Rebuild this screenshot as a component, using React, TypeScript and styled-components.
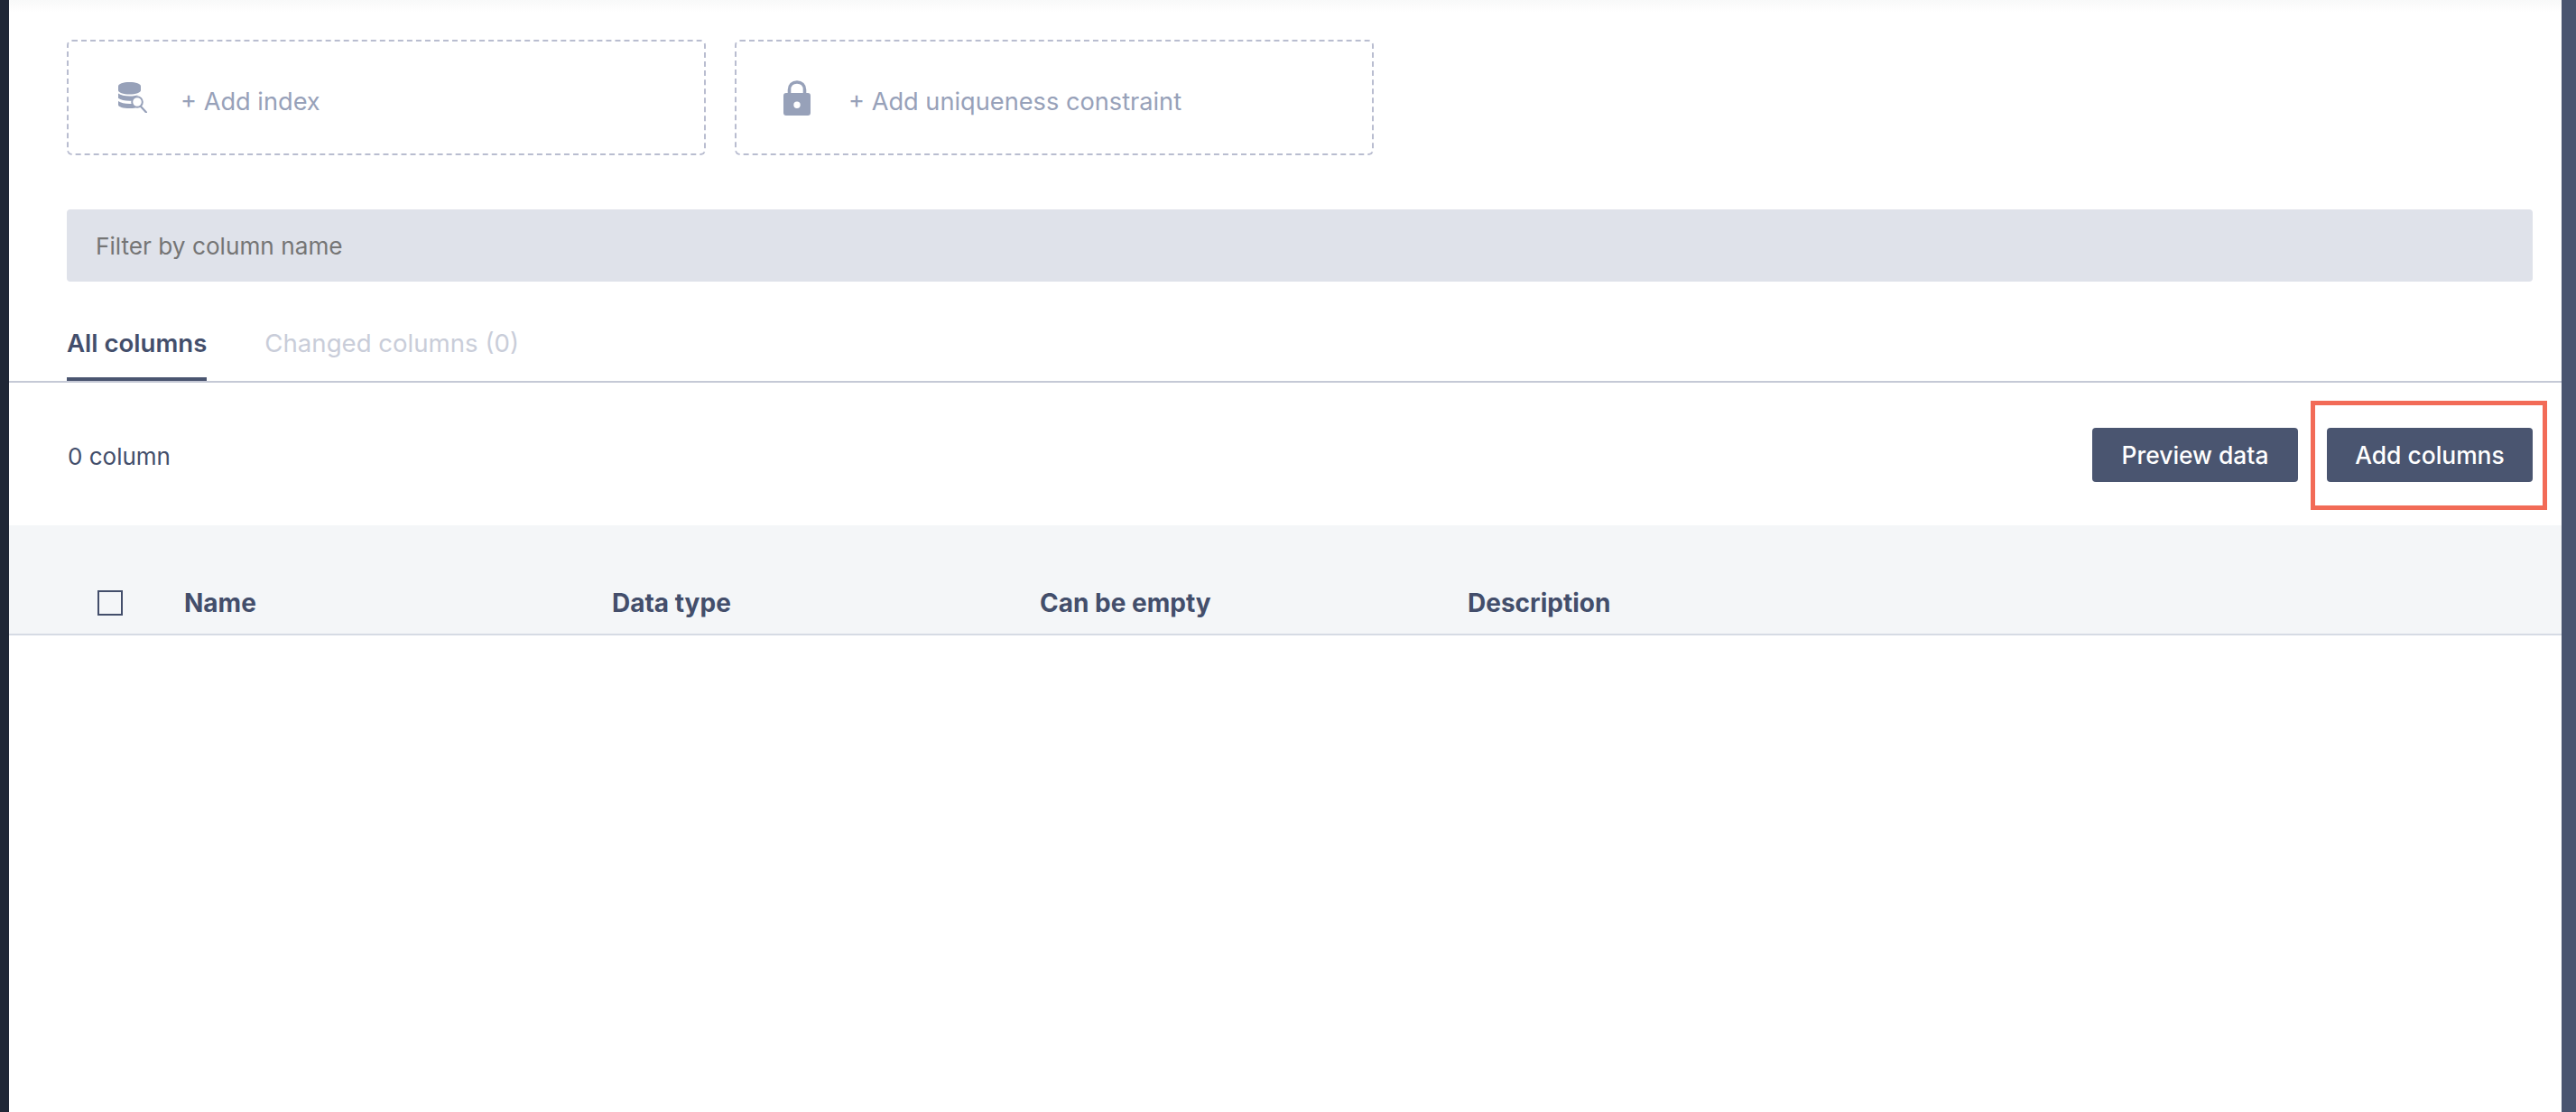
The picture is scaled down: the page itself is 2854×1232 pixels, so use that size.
import React from 'react';
import styled, { createGlobalStyle } from 'styled-components';

const GlobalStyle = createGlobalStyle`
  html, body {
    margin: 0;
    padding: 0;
    background: #fff;
    overflow: hidden;
  }
  * {
    box-sizing: border-box;
  }
`;

const Page = styled.div`
  display: flex;
  height: 1232px;
  font-family: Inter, "Liberation Sans", sans-serif;
  font-size: 28px;
  color: #434e6b;
`;

const LeftEdge = styled.div`
  width: 10px;
  background: #1f2736;
`;

const RightEdge = styled.div`
  width: 16px;
  background: #4a5570;
`;

const Main = styled.main`
  position: relative;
  flex: 1;
  min-width: 0;
  background: #fff;
`;

const TopShade = styled.div`
  height: 14px;
  background: linear-gradient(#f8f9f9, #fff);
`;

const Section = styled.div`
  padding: 0 32px 0 64px;
`;

const CardRow = styled(Section)`
  display: flex;
  gap: 32px;
  padding-top: 30px;
`;

const ActionCard = styled.div<{ $pad: number }>`
  display: flex;
  align-items: center;
  width: 708px;
  height: 128px;
  border: 2px dashed #b9bdd0;
  border-radius: 6px;
  color: #97a1b9;
  padding-left: ${(props) => props.$pad}px;
`;

const IconSlot = styled.span`
  display: flex;
  flex: 0 0 auto;
`;

const CardLabel = styled.span<{ $gap: number }>`
  margin-left: ${(props) => props.$gap}px;
  font-size: 27.2px;
  line-height: 34px;
  padding-top: 9px;
`;

const FilterBox = styled.input`
  display: block;
  width: 100%;
  height: 80px;
  margin-top: 60px;
  padding: 0 32px;
  border: 0;
  border-radius: 4px;
  background: #dfe2ea;
  font: inherit;
  font-size: 26.2px;
  outline: none;

  &::placeholder {
    color: #757575;
    opacity: 1;
  }
`;

const TabBar = styled.div`
  display: flex;
  gap: 64px;
  height: 112px;
  padding: 0 0 0 64px;
  border-bottom: 2px solid #c5c9d6;
`;

const Tab = styled.div<{ $active?: boolean }>`
  display: flex;
  align-items: flex-start;
  height: 110px;
  padding-top: 51px;
  font-size: 27.6px;
  line-height: 34px;
  font-weight: ${(props) => (props.$active ? 600 : 400)};
  color: ${(props) => (props.$active ? '#434e6b' : '#c9cdd9')};
  border-bottom: ${(props) => (props.$active ? '4px solid #4a5570' : '0')};
`;

const Toolbar = styled(Section)`
  display: flex;
  align-items: center;
  justify-content: space-between;
  height: 158px;
  padding-top: 2px;
`;

const CountLabel = styled.span`
  font-size: 26px;
  padding-top: 2px;
  padding-left: 1px;
`;

const Buttons = styled.div`
  display: flex;
  gap: 32px;
`;

const Button = styled.button`
  width: 228px;
  height: 60px;
  border: 0;
  border-radius: 4px;
  padding: 0;
  background: #4a5570;
  color: #fff;
  font: inherit;
  font-size: 26.4px;
  font-weight: 500;
`;

const Highlight = styled.div`
  position: absolute;
  left: 2550px;
  top: 444px;
  width: 262px;
  height: 121px;
  border: 5px solid #f26b57;
  pointer-events: none;
`;

const TableHead = styled.div`
  display: grid;
  grid-template-columns: 194px repeat(3, 474px) 1fr;
  align-items: center;
  height: 122px;
  padding: 62px 0 0;
  border-bottom: 2px solid #d6dbe4;
  background: #f4f6f8;
  font-weight: 700;
`;

const CheckCell = styled.div`
  display: flex;
  padding-left: 98px;
  margin-bottom: 10px;
`;

const CheckBox = styled.input.attrs({ type: 'checkbox' })`
  appearance: none;
  width: 28px;
  height: 28px;
  margin: 0;
  border: 2px solid #434e6b;
  background: transparent;
`;

const HeadCell = styled.div`
  line-height: 34px;
  margin-bottom: 10px;
`;

const DatabaseIcon = () => (
  <svg width="32" height="34" viewBox="0 0 32 34">
    <path
      fill="#97a1b9"
      d="M0 4.500C0 1.800 5.400 0 12.500 0S25 1.800 25 4.500V9c0 2.600-5.400 4.500-12.500 4.500S0 11.600 0 9z"
    />
    <path
      fill="#97a1b9"
      d="M0 12.500c2.600 2 7.200 3 12.500 3 4.400 0 8.300-.7 11-2.100-1.300.5-2.500 1.300-3.500 2.300-1.400 1.300-2.300 2.900-2.600 4.700-1.500.2-3.100.3-4.900.3-5.300 0-9.900-1-12.500-3z"
    />
    <path
      fill="#97a1b9"
      d="M0 21c2.600 2 7.200 3 12.500 3 1.500 0 3-.1 4.400-.2.300 1.800 1 3.300 2.200 4.600-1.900.4-4.200.6-6.600.6C5.400 29 0 27.500 0 25z"
    />
    <circle cx="21" cy="22" r="5.800" fill="#fff" stroke="#97a1b9" strokeWidth="2" />
    <path d="M25 27l6 6.500" stroke="#97a1b9" strokeWidth="2.200" strokeLinecap="round" />
  </svg>
);

const LockIcon = () => (
  <svg width="30" height="39" viewBox="0 0 30 39">
    <path
      fill="none"
      stroke="#97a1b9"
      strokeWidth="3.600"
      d="M6.500 17V10.500C6.500 5.500 10 2 15 2s8.500 3.500 8.500 8.500V17"
    />
    <path
      fill="#97a1b9"
      fillRule="evenodd"
      d="M3 14h24a3 3 0 0 1 3 3v19a3 3 0 0 1-3 3H3a3 3 0 0 1-3-3V17a3 3 0 0 1 3-3zm12 9.500a3.700 3.700 0 1 0 0 7.400 3.700 3.700 0 0 0 0-7.400z"
    />
  </svg>
);

const columns = ['Name', 'Data type', 'Can be empty', 'Description'];

const App: React.FC = () => {
  return (
    <Page>
      <GlobalStyle />
      <LeftEdge />
      <Main>
        <TopShade />
        <CardRow>
          <ActionCard $pad={55}>
            <IconSlot>
              <DatabaseIcon />
            </IconSlot>
            <CardLabel $gap={37}>+ Add index</CardLabel>
          </ActionCard>
          <ActionCard $pad={52}>
            <IconSlot>
              <LockIcon />
            </IconSlot>
            <CardLabel $gap={42}>+ Add uniqueness constraint</CardLabel>
          </ActionCard>
        </CardRow>
        <Section>
          <FilterBox placeholder="Filter by column name" readOnly />
        </Section>
        <TabBar>
          <Tab $active>All columns</Tab>
          <Tab>Changed columns (0)</Tab>
        </TabBar>
        <Toolbar>
          <CountLabel>0 column</CountLabel>
          <Buttons>
            <Button>Preview data</Button>
            <Button>Add columns</Button>
          </Buttons>
        </Toolbar>
        <TableHead>
          <CheckCell>
            <CheckBox readOnly />
          </CheckCell>
          {columns.map((name) => (
            <HeadCell key={name}>{name}</HeadCell>
          ))}
        </TableHead>
        <Highlight />
      </Main>
      <RightEdge />
    </Page>
  );
};

export default App;
